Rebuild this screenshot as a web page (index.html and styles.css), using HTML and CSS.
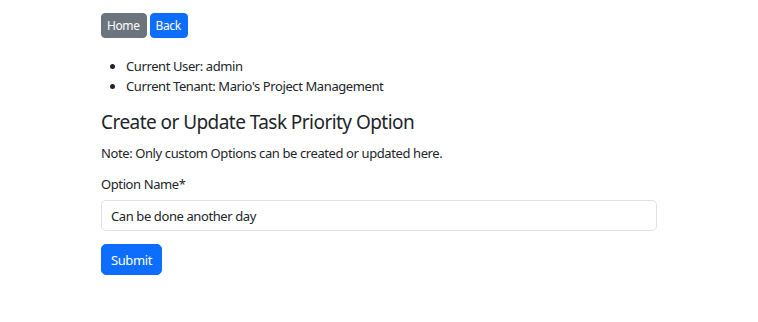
FILE: index.html
```html
<!DOCTYPE html>
<html lang="en">
<head>
<meta charset="utf-8">
<title>Create or Update Task Priority Option</title>
<link rel="stylesheet" href="styles.css">
</head>
<body>
<div class="container">
  <nav class="nav-buttons">
    <a class="btn btn-sm btn-secondary" href="#">Home</a>
    <a class="btn btn-sm btn-primary" href="#">Back</a>
  </nav>
  <ul class="info-list">
    <li>Current User: admin</li>
    <li>Current Tenant: Mario's Project Management</li>
  </ul>
  <h2 class="title">Create or Update Task Priority Option</h2>
  <p class="note">Note: Only custom Options can be created or updated here.</p>
  <form class="form">
    <label class="form-label" for="name">Option Name*</label>
    <input class="form-control" id="name" type="text" value="Can be done another day">
    <button class="btn btn-primary btn-submit" type="button">Submit</button>
  </form>
</div>
</body>
</html>
```
FILE: styles.css
```css
* { box-sizing: border-box; }
body {
  margin: 0;
  font-family: "Noto Sans", "DejaVu Sans", sans-serif;
  font-size: 13px;
  line-height: 20px;
  letter-spacing: -0.4px;
  color: #212529;
  background: #fff;
}
.container {
  max-width: 556px;
  margin: 0 auto;
  padding-top: 13px;
}
.nav-buttons {
  display: flex;
  gap: 3px;
}
.btn {
  display: inline-block;
  border: 1px solid transparent;
  border-radius: 4px;
  color: #fff;
  text-decoration: none;
  font-family: inherit;
  letter-spacing: -0.4px;
}
.btn-sm {
  font-size: 12px;
  line-height: 17px;
  padding: 3px 6px 3px 5px;
}
.btn-secondary { background: #6c757d; border-color: #6c757d; }
.btn-primary { background: #0d6efd; border-color: #0d6efd; }
.info-list {
  margin: 18px 0 14px;
  padding-left: 25px;
}
.title {
  margin: 0 0 9px;
  font-size: 19px;
  line-height: 24px;
  font-weight: 400;
  letter-spacing: -0.55px;
}
.note {
  margin: 0 0 11px;
}
.form {
  display: flex;
  flex-direction: column;
  align-items: flex-start;
}
.form-label {
  margin-bottom: 6px;
}
.form-control {
  width: 100%;
  height: 31px;
  padding: 0 9px;
  font-family: inherit;
  font-size: 13px;
  letter-spacing: -0.4px;
  color: #212529;
  border: 1px solid #dee2e6;
  border-radius: 5px;
  margin-bottom: 13px;
}
.btn-submit {
  height: 31px;
  padding: 0 9px;
  font-size: 13px;
  border-radius: 5px;
}
```
